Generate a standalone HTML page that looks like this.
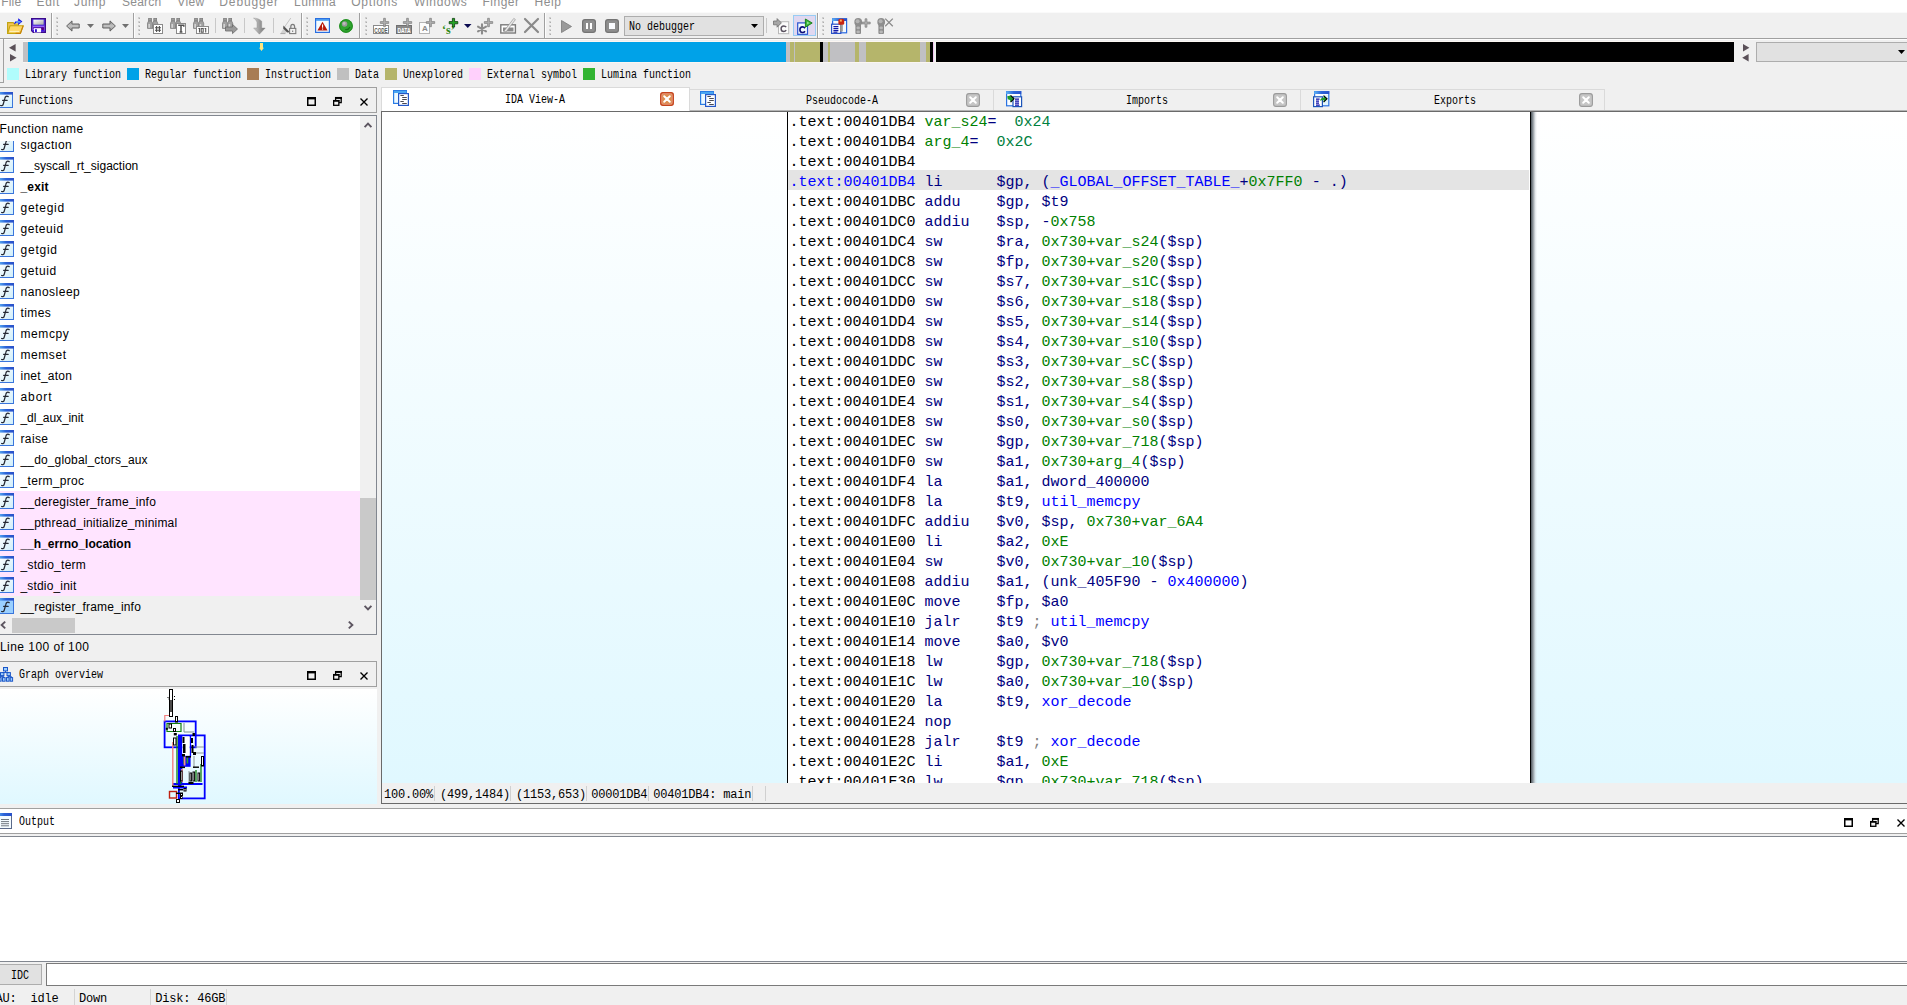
<!DOCTYPE html>
<html><head><meta charset="utf-8"><title>IDA</title><style>
html,body{margin:0;padding:0;overflow:hidden}
body{width:1907px;height:1005px;overflow:hidden;background:#f0f0f0;position:relative;font-family:"Liberation Sans",sans-serif}
div{position:absolute;box-sizing:border-box}
svg{position:absolute;overflow:visible}
.sim{font-family:"Liberation Mono",monospace;font-size:12px;line-height:12px;white-space:pre;height:12px;transform:scaleX(.8333);transform-origin:0 0;margin-top:-.3px;margin-left:.5px}
.ui{font-family:"Liberation Sans",sans-serif;font-size:12px;line-height:14px;white-space:pre;height:14px;color:#000}
.code{font-family:"Liberation Mono",monospace;font-size:15px;line-height:20px;white-space:pre;height:20px;left:0}
.st{font-family:"Liberation Mono",monospace;font-size:12px;letter-spacing:-0.2px;line-height:12px;white-space:pre;height:12px;color:#000}
.a{color:#000}.n{color:#000080}.g{color:#008000}.t{color:#008040}.b{color:#0000ff}.c{color:#808080}
</style></head><body>
<div style="left:0px;top:0px;width:1907px;height:12px;background:#fff"></div>
<div style="left:0px;top:12px;width:1907px;height:1px;background:#fafafa"></div>
<div style="left:0px;top:38px;width:1907px;height:1px;background:#a0a0a0"></div>
<div style="left:0px;top:39px;width:1907px;height:1px;background:#fcfcfc"></div>
<div style="left:51px;top:13px;width:1px;height:25px;background:#a0a0a0"></div>
<div style="left:52px;top:13px;width:1px;height:25px;background:#fdfdfd"></div>
<div style="left:133px;top:13px;width:1px;height:25px;background:#a0a0a0"></div>
<div style="left:134px;top:13px;width:1px;height:25px;background:#fdfdfd"></div>
<div style="left:301px;top:13px;width:1px;height:25px;background:#a0a0a0"></div>
<div style="left:302px;top:13px;width:1px;height:25px;background:#fdfdfd"></div>
<div style="left:359px;top:13px;width:1px;height:25px;background:#a0a0a0"></div>
<div style="left:360px;top:13px;width:1px;height:25px;background:#fdfdfd"></div>
<div style="left:544px;top:13px;width:1px;height:25px;background:#a0a0a0"></div>
<div style="left:545px;top:13px;width:1px;height:25px;background:#fdfdfd"></div>
<div style="left:817px;top:13px;width:1px;height:25px;background:#a0a0a0"></div>
<div style="left:818px;top:13px;width:1px;height:25px;background:#fdfdfd"></div>
<svg style="left:56px;top:17px" width="3" height="19"><rect x="0" y="0" width="2" height="2" fill="#d0d0d0"/><rect x="1" y="1" width="1" height="1" fill="#aeaeae"/><rect x="0" y="4" width="2" height="2" fill="#d0d0d0"/><rect x="1" y="5" width="1" height="1" fill="#aeaeae"/><rect x="0" y="8" width="2" height="2" fill="#d0d0d0"/><rect x="1" y="9" width="1" height="1" fill="#aeaeae"/><rect x="0" y="12" width="2" height="2" fill="#d0d0d0"/><rect x="1" y="13" width="1" height="1" fill="#aeaeae"/><rect x="0" y="16" width="2" height="2" fill="#d0d0d0"/><rect x="1" y="17" width="1" height="1" fill="#aeaeae"/></svg>
<svg style="left:138px;top:17px" width="3" height="19"><rect x="0" y="0" width="2" height="2" fill="#d0d0d0"/><rect x="1" y="1" width="1" height="1" fill="#aeaeae"/><rect x="0" y="4" width="2" height="2" fill="#d0d0d0"/><rect x="1" y="5" width="1" height="1" fill="#aeaeae"/><rect x="0" y="8" width="2" height="2" fill="#d0d0d0"/><rect x="1" y="9" width="1" height="1" fill="#aeaeae"/><rect x="0" y="12" width="2" height="2" fill="#d0d0d0"/><rect x="1" y="13" width="1" height="1" fill="#aeaeae"/><rect x="0" y="16" width="2" height="2" fill="#d0d0d0"/><rect x="1" y="17" width="1" height="1" fill="#aeaeae"/></svg>
<svg style="left:306px;top:17px" width="3" height="19"><rect x="0" y="0" width="2" height="2" fill="#d0d0d0"/><rect x="1" y="1" width="1" height="1" fill="#aeaeae"/><rect x="0" y="4" width="2" height="2" fill="#d0d0d0"/><rect x="1" y="5" width="1" height="1" fill="#aeaeae"/><rect x="0" y="8" width="2" height="2" fill="#d0d0d0"/><rect x="1" y="9" width="1" height="1" fill="#aeaeae"/><rect x="0" y="12" width="2" height="2" fill="#d0d0d0"/><rect x="1" y="13" width="1" height="1" fill="#aeaeae"/><rect x="0" y="16" width="2" height="2" fill="#d0d0d0"/><rect x="1" y="17" width="1" height="1" fill="#aeaeae"/></svg>
<svg style="left:365px;top:17px" width="3" height="19"><rect x="0" y="0" width="2" height="2" fill="#d0d0d0"/><rect x="1" y="1" width="1" height="1" fill="#aeaeae"/><rect x="0" y="4" width="2" height="2" fill="#d0d0d0"/><rect x="1" y="5" width="1" height="1" fill="#aeaeae"/><rect x="0" y="8" width="2" height="2" fill="#d0d0d0"/><rect x="1" y="9" width="1" height="1" fill="#aeaeae"/><rect x="0" y="12" width="2" height="2" fill="#d0d0d0"/><rect x="1" y="13" width="1" height="1" fill="#aeaeae"/><rect x="0" y="16" width="2" height="2" fill="#d0d0d0"/><rect x="1" y="17" width="1" height="1" fill="#aeaeae"/></svg>
<svg style="left:549px;top:17px" width="3" height="19"><rect x="0" y="0" width="2" height="2" fill="#d0d0d0"/><rect x="1" y="1" width="1" height="1" fill="#aeaeae"/><rect x="0" y="4" width="2" height="2" fill="#d0d0d0"/><rect x="1" y="5" width="1" height="1" fill="#aeaeae"/><rect x="0" y="8" width="2" height="2" fill="#d0d0d0"/><rect x="1" y="9" width="1" height="1" fill="#aeaeae"/><rect x="0" y="12" width="2" height="2" fill="#d0d0d0"/><rect x="1" y="13" width="1" height="1" fill="#aeaeae"/><rect x="0" y="16" width="2" height="2" fill="#d0d0d0"/><rect x="1" y="17" width="1" height="1" fill="#aeaeae"/></svg>
<svg style="left:822px;top:17px" width="3" height="19"><rect x="0" y="0" width="2" height="2" fill="#d0d0d0"/><rect x="1" y="1" width="1" height="1" fill="#aeaeae"/><rect x="0" y="4" width="2" height="2" fill="#d0d0d0"/><rect x="1" y="5" width="1" height="1" fill="#aeaeae"/><rect x="0" y="8" width="2" height="2" fill="#d0d0d0"/><rect x="1" y="9" width="1" height="1" fill="#aeaeae"/><rect x="0" y="12" width="2" height="2" fill="#d0d0d0"/><rect x="1" y="13" width="1" height="1" fill="#aeaeae"/><rect x="0" y="16" width="2" height="2" fill="#d0d0d0"/><rect x="1" y="17" width="1" height="1" fill="#aeaeae"/></svg>
<div style="left:215px;top:18px;width:1px;height:15px;background:#c8c8c8"></div>
<div style="left:244px;top:18px;width:1px;height:15px;background:#c8c8c8"></div>
<div style="left:273px;top:18px;width:1px;height:15px;background:#c8c8c8"></div>
<div style="left:766px;top:18px;width:1px;height:15px;background:#c8c8c8"></div>
<svg style="left:7px;top:17px" width="17" height="17" viewBox="0 0 17 17">
<path d="M.6 5.6h5.6l1.2 1.4h4V16.4H.6z" fill="#f6c455" stroke="#bfa310" stroke-width="1.1"/>
<path d="M3 8.8h13.2L13.4 16.4H.7z" fill="#ffd868" stroke="#c4a512" stroke-width="1.1"/>
<path d="M13.4 16.4H8.6M16.2 8.8l-2.8 7.6" stroke="#c8800a" stroke-width="1.1" fill="none"/>
<path d="M2.6 14.4h9.4" stroke="#fff3c4" stroke-width="1"/>
<path d="M7 7.6c.2-2.4 1.4-3.8 4.2-3.8V1.2L15.4 4.6 11.2 8V5.8c-1.8 0-3.2.4-4.2 1.8z" fill="#1414e4"/>
<path d="M9 4.9h4.6" stroke="#7fe4ff" stroke-width="1.1"/></svg>
<svg style="left:31px;top:18px" width="15" height="15" viewBox="0 0 15 15">
<path d="M.7.7h13.6v13.6H2.3L.7 12.7z" fill="#9966ff" stroke="#3a0a8c" stroke-width="1.4"/>
<rect x="1.4" y="1.4" width="12.2" height="6.2" fill="#3418cc"/>
<rect x="2.3" y="1.7" width="10.4" height="5" fill="url(#gfl)"/>
<rect x="2.2" y="9.2" width="10.6" height="1.4" fill="#4a0a98"/>
<rect x="10.4" y="9.6" width="2.5" height="2.8" fill="#5a0078"/>
<rect x="3" y="10.2" width="7" height="4.2" fill="#fbfbff"/>
<rect x="4" y="11.2" width="1.9" height="2.8" fill="#3010d0"/>
<path d="M1.6 12.8h1.4M10.2 12.8h3" stroke="#2200e6" stroke-width="1"/></svg>
<svg style="left:66px;top:19.5px" width="14" height="12" viewBox="0 0 14 12"><path d="M0.6 6 6 .9v3.1h7.2v4H6v3.1z" fill="url(#gar)" stroke="#626262" stroke-width="1"/></svg>
<svg style="left:87px;top:24px" width="7" height="4" viewBox="0 0 7 4"><path d="M0 0h7l-3.5 4z" fill="#707070"/></svg>
<svg style="left:101.5px;top:19.5px" width="14" height="12" viewBox="0 0 14 12"><path d="M13.4 6 8 .9v3.1H.8v4H8v3.1z" fill="url(#gar)" stroke="#626262" stroke-width="1"/></svg>
<svg style="left:122px;top:24px" width="7" height="4" viewBox="0 0 7 4"><path d="M0 0h7l-3.5 4z" fill="#707070"/></svg>
<svg style="left:147px;top:18px" width="16" height="16" viewBox="0 0 16 16"><g stroke="#7e7e7e" stroke-width=".8"><rect x="1.6" y=".5" width="2.8" height="2.6" fill="#9c9c9c"/><rect x="6.8" y=".5" width="2.8" height="2.6" fill="#9c9c9c"/><path d="M.5 10.4V5.2L1.6 3h2.8l1.1 2.2v5.2z" fill="#a2a2a2"/><path d="M5.7 10.4V5.2L6.8 3h2.8l1.1 2.2v5.2z" fill="#a2a2a2"/></g><rect x="1.4" y="6" width="1.6" height="3.8" fill="#d4d4d4"/><rect x="6.6" y="6" width="1.6" height="3.8" fill="#d4d4d4"/><rect x="4.9" y="5" width="1.2" height="2" fill="#8a8a8a"/><rect x="6.5" y="6.5" width="9" height="9" fill="#fff" stroke="#8a8a8a"/><path d="M9.6 8v6M12.4 8v6M8 9.7h6M8 12.3h6" stroke="#505050" stroke-width="1.1" fill="none"/></svg>
<svg style="left:170px;top:18px" width="16" height="16" viewBox="0 0 16 16"><g stroke="#7e7e7e" stroke-width=".8"><rect x="1.6" y=".5" width="2.8" height="2.6" fill="#9c9c9c"/><rect x="6.8" y=".5" width="2.8" height="2.6" fill="#9c9c9c"/><path d="M.5 10.4V5.2L1.6 3h2.8l1.1 2.2v5.2z" fill="#a2a2a2"/><path d="M5.7 10.4V5.2L6.8 3h2.8l1.1 2.2v5.2z" fill="#a2a2a2"/></g><rect x="1.4" y="6" width="1.6" height="3.8" fill="#d4d4d4"/><rect x="6.6" y="6" width="1.6" height="3.8" fill="#d4d4d4"/><rect x="4.9" y="5" width="1.2" height="2" fill="#8a8a8a"/><rect x="6.5" y="5.5" width="9" height="10" fill="#fff" stroke="#8a8a8a"/><path d="M8.2 7.2h5.6v1.6M11 7.2v6.6M9.6 13.9h2.8" stroke="#505050" stroke-width="1.5" fill="none"/></svg>
<svg style="left:193px;top:18px" width="16" height="16" viewBox="0 0 16 16"><g stroke="#7e7e7e" stroke-width=".8"><rect x="1.6" y=".5" width="2.8" height="2.6" fill="#9c9c9c"/><rect x="6.8" y=".5" width="2.8" height="2.6" fill="#9c9c9c"/><path d="M.5 10.4V5.2L1.6 3h2.8l1.1 2.2v5.2z" fill="#a2a2a2"/><path d="M5.7 10.4V5.2L6.8 3h2.8l1.1 2.2v5.2z" fill="#a2a2a2"/></g><rect x="1.4" y="6" width="1.6" height="3.8" fill="#d4d4d4"/><rect x="6.6" y="6" width="1.6" height="3.8" fill="#d4d4d4"/><rect x="4.9" y="5" width="1.2" height="2" fill="#8a8a8a"/><rect x="3.5" y="8.5" width="12" height="7" fill="#fff" stroke="#8a8a8a"/><path d="M5.4 10.5h1.1v4M11.6 10.5h1.1v4" stroke="#585858" stroke-width="1.1" fill="none"/><rect x="8.2" y="10.5" width="2" height="3.7" fill="none" stroke="#585858" stroke-width="1.1"/></svg>
<svg style="left:222px;top:18px" width="16" height="16" viewBox="0 0 16 16"><g stroke="#7e7e7e" stroke-width=".8"><rect x="1.6" y=".5" width="2.8" height="2.6" fill="#9c9c9c"/><rect x="6.8" y=".5" width="2.8" height="2.6" fill="#9c9c9c"/><path d="M.5 10.4V5.2L1.6 3h2.8l1.1 2.2v5.2z" fill="#a2a2a2"/><path d="M5.7 10.4V5.2L6.8 3h2.8l1.1 2.2v5.2z" fill="#a2a2a2"/></g><rect x="1.4" y="6" width="1.6" height="3.8" fill="#d4d4d4"/><rect x="6.6" y="6" width="1.6" height="3.8" fill="#d4d4d4"/><rect x="4.9" y="5" width="1.2" height="2" fill="#8a8a8a"/><path d="M3.5 9h7V6.4l5 4.6-5 4.6V13h-7z" fill="#9a9a9a" stroke="#6a6a6a" stroke-width=".8"/></svg>
<svg style="left:253px;top:17px" width="13" height="18" viewBox="0 0 13 18"><defs><linearGradient id="gda" x1="0" x2="1"><stop offset="0" stop-color="#d0d0d0"/><stop offset=".55" stop-color="#9a9a9a"/><stop offset="1" stop-color="#767676"/></linearGradient></defs><path d="M.5 1.2C3.6 1 6.6 2 8.7 4.2V11h3.5L6.4 17.2.6 11H4V5.6C3.6 3.4 2.2 1.9.5 1.2z" fill="url(#gda)" stroke="#8a8a8a" stroke-width=".4"/></svg>
<svg style="left:280px;top:17px" width="17" height="17" viewBox="0 0 17 17"><path d="M10.8 1 3.6 11.4" stroke="#c4c4c4" stroke-width="1"/><path d="M4 10.8 7.6 14 5.4 16.6H.4z" fill="#d2d2d2"/><path d="M.4 16.6h5" stroke="#a8a8a8" stroke-width="1"/><path d="M3.4 8.4 10 15.2 7.2 15.6 3.2 11.6z" fill="#555"/><path d="M5.4 9.6 14.5 6.4 15 11" fill="#e6e6e6" opacity=".7"/><rect x="9.6" y="11.4" width="6.2" height="5.2" fill="#f2f2f2" stroke="#7c7c7c" stroke-width="1.1"/><path d="M10.8 11.4V9.6a1.9 2.3 0 0 1 3.8 0v1.8" fill="none" stroke="#7c7c7c" stroke-width="1.2"/><rect x="12.2" y="13.6" width="1" height="1.2" fill="#505050"/></svg>
<svg style="left:315px;top:18px" width="15" height="15" viewBox="0 0 15 15"><rect x=".6" y=".6" width="13.8" height="13.8" fill="#f4fbff" stroke="#2a6fe0" stroke-width="1.2"/><rect x="1" y="1" width="13" height="1.8" fill="#4a9cf0"/><path d="M7.5 3.8 12.6 12.6H2.4z" fill="#b81808"/><rect x="7" y="6.4" width="1.1" height="3.3" fill="#fff"/><rect x="7" y="10.5" width="1.1" height="1.1" fill="#fff"/></svg>
<svg style="left:339px;top:19px" width="14" height="14" viewBox="0 0 14 14"><circle cx="7" cy="7" r="6.8" fill="#2fa42f"/><circle cx="7" cy="7" r="6.3" fill="none" stroke="#1c8a1c" stroke-width="1"/><circle cx="5.6" cy="5" r="2.7" fill="#9a9a9a"/><circle cx="5.2" cy="4.5" r="1.4" fill="#bdbdbd"/><path d="M6.2 10.5c2 .4 3.8-.6 4.8-2.6" stroke="#157015" stroke-width="1.2" fill="none"/></svg>
<svg style="left:373px;top:18px" width="16" height="16" viewBox="0 0 16 16"><rect x=".5" y="7.5" width="15" height="8" fill="#fff" stroke="#8a8a8a"/><text x="1.3" y="14.8" font-family="Liberation Sans" font-weight="700" font-size="7.4" fill="#585858" textLength="13.4" lengthAdjust="spacingAndGlyphs">CODE</text><path d="M10.6 0.3h1.8v3.3h3.3v1.8h-3.3v3.3h-1.8v-3.3h-3.3v-1.8h3.3z" fill="#b0b0b0" stroke="#7c7c7c" stroke-width=".7"/></svg>
<svg style="left:396px;top:18px" width="16" height="16" viewBox="0 0 16 16"><rect x=".5" y="7.5" width="15" height="8" fill="#8a8a8a" stroke="#707070"/><text x="1.4" y="14.8" font-family="Liberation Sans" font-weight="700" font-size="7.4" fill="#fff" textLength="13.2" lengthAdjust="spacingAndGlyphs">DATA</text><path d="M10.6 0.3h1.8v3.3h3.3v1.8h-3.3v3.3h-1.8v-3.3h-3.3v-1.8h3.3z" fill="#b0b0b0" stroke="#7c7c7c" stroke-width=".7"/></svg>
<svg style="left:419px;top:18px" width="16" height="16" viewBox="0 0 16 16"><rect x=".5" y="4.5" width="10" height="11" fill="#fcfcfc" stroke="#b4b4b4"/><text x="2.9" y="13.4" font-family="Liberation Sans" font-weight="700" font-size="8" fill="#8a8a8a">A</text><path d="M10.6 0.3h1.8v3.3h3.3v1.8h-3.3v3.3h-1.8v-3.3h-3.3v-1.8h3.3z" fill="#b0b0b0" stroke="#7c7c7c" stroke-width=".7"/></svg>
<svg style="left:442px;top:18px" width="16" height="16" viewBox="0 0 16 16"><text x="0" y="15.6" font-family="Liberation Serif" font-weight="700" font-size="12" fill="#2f8a18">‘s’</text><path d="M10.4.4h2.2v3.2h3.2v2.2h-3.2V9h-2.2V5.8H7.2V3.6h3.2z" fill="#25a825" stroke="#0a3a0a" stroke-width=".8"/></svg>
<svg style="left:464px;top:24px" width="7.5" height="4" viewBox="0 0 7.5 4"><path d="M0 0h7.5l-3.75 4z" fill="#0a0a50"/></svg>
<svg style="left:477px;top:18px" width="16" height="16" viewBox="0 0 16 16"><path d="M5 6.4v9.2M1 8.7l8 4.6M1 13.3l8-4.6" stroke="#8c8c8c" stroke-width="2.1" fill="none" stroke-linecap="round"/><path d="M10.6 0.3h1.8v3.3h3.3v1.8h-3.3v3.3h-1.8v-3.3h-3.3v-1.8h3.3z" fill="#b0b0b0" stroke="#7c7c7c" stroke-width=".7"/></svg>
<svg style="left:500px;top:17px" width="17" height="17" viewBox="0 0 17 17"><rect x=".8" y="7.8" width="14.6" height="8.2" fill="#fff" stroke="#7a7a7a" stroke-width="1.4"/><path d="M3 14.5V10.5h10.5v4z" fill="#8a8a8a"/><path d="M4 14 13.8 1.4l1.6 1.2L6 15z" fill="#e8e8e8" stroke="#8a8a8a" stroke-width=".6"/></svg>
<svg style="left:524px;top:18px" width="15" height="15" viewBox="0 0 15 15"><path d="M1 1 14 14M14 1 1 14" stroke="#8a8a8a" stroke-width="2.2" stroke-linecap="round"/></svg>
<svg style="left:561px;top:20px" width="11" height="13" viewBox="0 0 11 13"><path d="M.5.5 10.5 6.5.5 12.5z" fill="#9a9a9a" stroke="#7a7a7a" stroke-width=".8"/></svg>
<svg style="left:582px;top:19px" width="14" height="14" viewBox="0 0 14 14"><rect x=".6" y=".6" width="12.8" height="12.8" rx="2.4" fill="#8e8e8e" stroke="#747474" stroke-width="1.2"/><rect x="4" y="4" width="2" height="6" fill="#fff"/><rect x="8" y="4" width="2" height="6" fill="#fff"/></svg>
<svg style="left:605px;top:19px" width="14" height="14" viewBox="0 0 14 14"><rect x=".6" y=".6" width="12.8" height="12.8" rx="2.4" fill="#8e8e8e" stroke="#747474" stroke-width="1.2"/><rect x="4" y="4" width="6" height="6" fill="#fafcff"/></svg>
<div style="left:624px;top:16px;width:140px;height:20px;background:#e1e1e1;border:1px solid #adadad"></div>
<div class="sim" style="left:628px;top:21.1px;color:#000;">No debugger</div>
<svg style="left:751px;top:24px" width="7" height="4" viewBox="0 0 7 4"><path d="M0 0h7l-3.5 4z" fill="#000"/></svg>
<svg style="left:773px;top:18px" width="16" height="16" viewBox="0 0 16 16"><rect x="5.5" y="3.7" width="10.2" height="12" fill="#fbfbfb" stroke="#b8b8b8"/><path d="M13.2 9.2c-.6-.9-1.4-1.3-2.4-1.3-1.6 0-2.7 1.1-2.7 2.8s1.1 2.8 2.7 2.8c1 0 1.8-.4 2.4-1.3" fill="none" stroke="#5a5260" stroke-width="1.45"/><path d="M.5 3h3.6V.6L8.4 4.9 4.1 9.2V6.8H.5z" fill="#a6a6a6" stroke="#6e6e6e" stroke-width=".8"/></svg>
<div style="left:793px;top:15px;width:23px;height:21px;background:#e0d8f0;border:1px solid #98ccf4"></div>
<svg style="left:797px;top:18px" width="16" height="17" viewBox="0 0 16 17"><rect x=".7" y="4.9" width="9.8" height="11.4" fill="#f4fcff" stroke="#2a52d0" stroke-width="1.2"/><path d="M8 10.2c-.6-.9-1.4-1.3-2.4-1.3-1.6 0-2.7 1.1-2.7 2.8s1.1 2.8 2.7 2.8c1 0 1.8-.4 2.4-1.3" fill="none" stroke="#0c0c78" stroke-width="1.6"/><path d="M8.4 1 15.2 5 8.4 9.2z" fill="#3cb43c" stroke="#137a13" stroke-width=".9"/><path d="M10 3.6 12.6 5 10 6.6z" fill="#8ee08e"/></svg>
<svg style="left:831px;top:18px" width="16" height="16" viewBox="0 0 16 16"><rect x="1.6" y=".8" width="14" height="14" fill="#f4faff" stroke="#2a6ae0" stroke-width="1.2"/><rect x="1.2" y=".4" width="14.8" height="2.6" fill="url(#gft)"/><rect x=".6" y="6.2" width="9.2" height="9.2" fill="#fff" stroke="#2a52c8" stroke-width="1.2"/><path d="M2.4 8.6h5M2.4 10.6h5M2.4 12.6h5M2.4 14.2h4" stroke="#1018a8" stroke-width="1.1"/><rect x="9" y="6.5" width="2.6" height="7" fill="#7a7a7a"/><rect x="9.6" y="7" width="1" height="6" fill="#b0b0b0"/><rect x="7.4" y=".8" width="5.8" height="6" rx="1.6" fill="#c82410"/><rect x="8.8" y="1.6" width="2" height="2" fill="#f8b060"/></svg>
<svg style="left:854px;top:18px" width="17" height="16" viewBox="0 0 17 16"><rect x="1.4" y="5" width="5.6" height="11" rx="1" fill="#8a8a8a"/><circle cx="4.2" cy="4" r="3.9" fill="#8e8e8e"/><circle cx="3.6" cy="3.2" r="2" fill="#b4b4b4"/><rect x="2.6" y="8.4" width="3.2" height="2.8" rx=".8" fill="#b8b8b8"/><rect x="2.6" y="12.4" width="3.2" height="2.8" rx=".8" fill="#b8b8b8"/><path d="M11.1 .8h1.8v3.3h3.3v1.8h-3.3v3.3h-1.8V5.9H7.8V4.1h3.3z" fill="#b0b0b0" stroke="#7c7c7c" stroke-width=".7"/></svg>
<svg style="left:877px;top:18px" width="17" height="16" viewBox="0 0 17 16"><rect x="1.4" y="5" width="5.6" height="11" rx="1" fill="#8a8a8a"/><circle cx="4.2" cy="4" r="3.9" fill="#8e8e8e"/><circle cx="3.6" cy="3.2" r="2" fill="#b4b4b4"/><rect x="2.6" y="8.4" width="3.2" height="2.8" rx=".8" fill="#b8b8b8"/><rect x="2.6" y="12.4" width="3.2" height="2.8" rx=".8" fill="#b8b8b8"/><path d="M8.2.6 15.8 8.2M15.8.6 8.2 8.2" stroke="#8a8a8a" stroke-width="1.3"/></svg>
<div style="left:3px;top:39px;width:1px;height:44px;background:#a0a0a0"></div>
<div style="left:0px;top:82px;width:4px;height:1px;background:#a0a0a0"></div>
<svg style="left:9px;top:44px" width="7" height="8" viewBox="0 0 7 8"><path d="M6.6 0v7.6L0 3.8z" fill="#5a5058"/></svg>
<svg style="left:10px;top:54px" width="7" height="8" viewBox="0 0 7 8"><path d="M0 0v7.6L6.6 3.8z" fill="#5a5058"/></svg>
<div style="left:23px;top:41px;width:1711px;height:22px;background:#fbf6f2"></div>
<div style="left:23px;top:42px;width:5px;height:20px;background:#c0c0c3"></div>
<div style="left:28px;top:42px;width:758px;height:20px;background:#00a2e8"></div>
<div style="left:786px;top:42px;width:4px;height:20px;background:#c0c0c3"></div>
<div style="left:790px;top:42px;width:4px;height:20px;background:#b5b56b"></div>
<div style="left:794px;top:42px;width:1px;height:20px;background:#c0c0c3"></div>
<div style="left:795px;top:42px;width:25px;height:20px;background:#b5b56b"></div>
<div style="left:820px;top:42px;width:3px;height:20px;background:#000"></div>
<div style="left:823px;top:42px;width:5px;height:20px;background:#c0c0c3"></div>
<div style="left:828px;top:42px;width:2px;height:20px;background:#b5b56b"></div>
<div style="left:830px;top:42px;width:25px;height:20px;background:#c0c0c3"></div>
<div style="left:855px;top:42px;width:4px;height:20px;background:#b5b56b"></div>
<div style="left:859px;top:42px;width:7px;height:20px;background:#c0c0c3"></div>
<div style="left:866px;top:42px;width:54px;height:20px;background:#b5b56b"></div>
<div style="left:920px;top:42px;width:6px;height:20px;background:#c0c0c3"></div>
<div style="left:926px;top:42px;width:4px;height:20px;background:#b5b56b"></div>
<div style="left:930px;top:42px;width:3px;height:20px;background:#000"></div>
<div style="left:933px;top:42px;width:1px;height:20px;background:#f4c8f4"></div>
<div style="left:934px;top:42px;width:2px;height:20px;background:#f0f0f0"></div>
<div style="left:936px;top:42px;width:798px;height:20px;background:#000"></div>
<svg style="left:259px;top:43px" width="5" height="8" viewBox="0 0 5 8"><path d="M1 0h3v4.8h1L2.5 8 0 4.8h1z" fill="#ffe680"/></svg>
<svg style="left:1743px;top:44px" width="7" height="8" viewBox="0 0 7 8"><path d="M0 0v7.6L6.4 3.8z" fill="#5a5058"/></svg>
<svg style="left:1742px;top:54px" width="7" height="8" viewBox="0 0 7 8"><path d="M6.6 0v7.6L.2 3.8z" fill="#5a5058"/></svg>
<div style="left:1756px;top:42px;width:160px;height:20px;background:#e1e1e1;border:1px solid #adadad"></div>
<svg style="left:1898px;top:50px" width="7" height="4" viewBox="0 0 7 4"><path d="M0 0h7l-3.5 4z" fill="#000"/></svg>
<svg width="0" height="0" style="left:0;top:0"><defs>
<linearGradient id="gfi" x1="0" y1="0" x2="1" y2="1"><stop offset="0" stop-color="#ffffff"/><stop offset="1" stop-color="#cfeefa"/></linearGradient>
<linearGradient id="gft" x1="0" x2="1"><stop offset="0" stop-color="#5fb4f4"/><stop offset=".5" stop-color="#2a62d8"/><stop offset="1" stop-color="#2a50c8"/></linearGradient>
<linearGradient id="gar" x1="0" y1="0" x2="0" y2="1"><stop offset="0" stop-color="#8a8a8a"/><stop offset=".5" stop-color="#c4c4c4"/><stop offset="1" stop-color="#8a8a8a"/></linearGradient>
<linearGradient id="gfl" x1="0" y1="0" x2="1" y2="1"><stop offset="0" stop-color="#ffffff"/><stop offset="1" stop-color="#a8a8a8"/></linearGradient>
</defs></svg>
<div style="left:-1px;top:87px;width:378px;height:26px;background:#f0f0f0;border:1px solid #a0a0a0"></div>
<svg style="left:-3px;top:92px" width="16" height="16" viewBox="0 0 16 16"><rect x=".5" y=".5" width="15" height="15" fill="url(#gfi)" stroke="#3a76dc"/><rect x="0" y="0" width="16" height="2.6" fill="url(#gft)"/><path d="M11.2 4.6c-1.5-.9-2.9-.2-3.3 1.6L6.3 12c-.4 1.5-1.3 2-2.7 1.5M5.6 8.3h4.6" fill="none" stroke="#262a34" stroke-width="1.25" stroke-linecap="round"/></svg>
<div class="sim" style="left:18px;top:95px;color:#000;">Functions</div>
<svg style="left:307px;top:97px" width="9" height="9" viewBox="0 0 9 9"><rect x=".75" y=".75" width="7.5" height="7.5" fill="none" stroke="#000" stroke-width="1.5"/><rect x="0" y="0" width="9" height="2.4" fill="#000"/></svg>
<svg style="left:333.4px;top:97px" width="9" height="9" viewBox="0 0 9 9"><rect x="2.6" y=".6" width="5.6" height="5" fill="none" stroke="#000" stroke-width="1.3"/><rect x="2" y="0" width="7" height="1.9" fill="#000"/><rect x=".65" y="3.6" width="5.2" height="4.7" fill="#f0f0f0" stroke="#000" stroke-width="1.3"/><rect x="0" y="3" width="6.5" height="1.7" fill="#000"/></svg>
<svg style="left:360px;top:97.5px" width="8" height="8" viewBox="0 0 8 8"><path d="M.5.5 7.5 7.5M7.5.5.5 7.5" stroke="#000" stroke-width="1.35"/></svg>
<div style="left:-1px;top:115px;width:378px;height:520px;background:#fff;border:1px solid #828790"></div>
<div style="left:0px;top:491px;width:360px;height:105px;background:#ffe4ff"></div>
<div style="left:0px;top:596px;width:360px;height:21px;background:#f0f0f0"></div>
<div style="left:360px;top:116px;width:16px;height:501px;background:#f0f0f0"></div>
<div style="left:360px;top:498px;width:16px;height:102px;background:#c9c9c9"></div>
<svg style="left:364px;top:122px" width="8" height="6" viewBox="0 0 8 6"><path d="M.6 5.2 4 1.6 7.4 5.2" stroke="#5c5560" stroke-width="1.9" fill="none"/></svg>
<svg style="left:364px;top:605px" width="8" height="6" viewBox="0 0 8 6"><path d="M.6.8 4 4.4 7.4.8" stroke="#5c5560" stroke-width="1.9" fill="none"/></svg>
<div style="left:0px;top:617px;width:376px;height:17px;background:#f0f0f0"></div>
<div style="left:12px;top:618px;width:63px;height:15px;background:#c9c9c9"></div>
<svg style="left:0px;top:621px" width="6" height="8" viewBox="0 0 6 8"><path d="M5.2.6 1.6 4 5.2 7.4" stroke="#5c5560" stroke-width="1.9" fill="none"/></svg>
<svg style="left:348px;top:621px" width="6" height="8" viewBox="0 0 6 8"><path d="M.8.6 4.4 4 .8 7.4" stroke="#5c5560" stroke-width="1.9" fill="none"/></svg>
<div style="left:-1px;top:661px;width:378px;height:26px;background:#f0f0f0;border:1px solid #a0a0a0"></div>
<svg style="left:-3px;top:667px" width="16" height="15" viewBox="0 0 16 15"><g fill="#9fd0ff" stroke="#1a56c8" stroke-width="1"><rect x="6.5" y=".5" width="4" height="3.4"/><rect x="3.5" y="5.6" width="3.4" height="3"/><rect x="10" y="5.6" width="3.4" height="3"/><rect x="1.5" y="10.6" width="2.6" height="3.6"/><rect x="5.5" y="10.6" width="2.6" height="3.6"/><rect x="9.5" y="10.6" width="2.6" height="3.6"/><rect x="13.2" y="10.6" width="2.4" height="3.6"/></g><path d="M8.5 4v1.6M5.2 5.6h6.6M2.8 10.6v-1h4v1M10.8 10.6v-1h3.6v1" stroke="#1a56c8" fill="none"/></svg>
<div class="sim" style="left:18px;top:669px;color:#000;">Graph overview</div>
<svg style="left:307px;top:671px" width="9" height="9" viewBox="0 0 9 9"><rect x=".75" y=".75" width="7.5" height="7.5" fill="none" stroke="#000" stroke-width="1.5"/><rect x="0" y="0" width="9" height="2.4" fill="#000"/></svg>
<svg style="left:333.4px;top:671px" width="9" height="9" viewBox="0 0 9 9"><rect x="2.6" y=".6" width="5.6" height="5" fill="none" stroke="#000" stroke-width="1.3"/><rect x="2" y="0" width="7" height="1.9" fill="#000"/><rect x=".65" y="3.6" width="5.2" height="4.7" fill="#f0f0f0" stroke="#000" stroke-width="1.3"/><rect x="0" y="3" width="6.5" height="1.7" fill="#000"/></svg>
<svg style="left:360px;top:671.5px" width="8" height="8" viewBox="0 0 8 8"><path d="M.5.5 7.5 7.5M7.5.5.5 7.5" stroke="#000" stroke-width="1.35"/></svg>
<div style="left:0px;top:689px;width:377px;height:115px;background:linear-gradient(#ffffff,#e0f8ff)"></div>
<svg style="left:120px;top:680px" width="140" height="130" viewBox="0 0 140 130">
<g fill="none" stroke-width="1.6">
<rect x="44.6" y="41.4" width="31.1" height="25.9" stroke="#0000ff" stroke-width="1.8"/>
<rect x="58.9" y="55.4" width="25.8" height="63" stroke="#0000ff" stroke-width="1.8"/>
<rect x="59" y="55.5" width="3.4" height="48" fill="#0000ff" stroke="none"/><rect x="59" y="75.6" width="11.6" height="11.2" fill="#0000ff" stroke="none"/><rect x="69.6" y="55.5" width="1.5" height="21" fill="#0000ff" stroke="none"/><rect x="62.4" y="56.6" width="7.2" height="19" fill="#fff" stroke="none"/>
<rect x="58.5" y="86" width="3" height="22" fill="#0000ff" stroke="none"/>
<path d="M52.5 104h30M53 107.5h14" stroke="#0000ff" stroke-width="2.2"/>
<path d="M44.8 41.5v-6h6" stroke="#f08080" stroke-width="1.2"/>
<path d="M52.8 62v44" stroke="#f08080" stroke-width="1.4"/>
<path d="M57 56v48M60.8 92v12M81 84v18M76 90v12M64 76v8" stroke="#108010" stroke-width="1.3"/>
<path d="M47 43.5h14v8h-14z" stroke="#108010" stroke-width="1.2"/>
<path d="M64 43v9M64 52h10" stroke="#809090" stroke-width="1"/>
<path d="M75 67h9M76 73h8M69 91v12M74 76v12" stroke="#909898" stroke-width="1"/>
<path d="M64.6 76.5v9M62 89v13" stroke="#f09090" stroke-width="1.8"/><path d="M67.4 76.5v7" stroke="#30a030" stroke-width="1.6"/>
<rect x="49.5" y="111.5" width="7" height="6.5" stroke="#c02010" stroke-width="1.4"/>
</g>
<g fill="#fff" stroke="#000" stroke-width="1">
<rect x="49.5" y="9.5" width="3" height="27"/>
<rect x="55.5" y="36.5" width="2" height="5.5"/>
<rect x="49" y="44" width="2.5" height="4"/>
<rect x="53.5" y="48.5" width="2" height="3"/>
<rect x="53.5" y="58" width="2.5" height="7"/>
<rect x="81.5" y="76.5" width="2" height="9.5"/>
<rect x="70" y="93" width="1.6" height="8"/><rect x="73" y="92" width="1.6" height="9"/><rect x="78" y="93" width="1.6" height="8"/>
<rect x="60.5" y="91" width="1.6" height="10"/>
<rect x="56.5" y="119.5" width="3" height="3"/>
<rect x="60.5" y="113" width="2" height="2.5"/><rect x="64" y="108.5" width="2" height="2.5"/><rect x="60.5" y="116.5" width="1.5" height="2"/>
</g>
<g fill="#000">
<rect x="50.3" y="20" width="1.4" height="12"/><rect x="47.5" y="17" width="1" height="1"/><rect x="54" y="16" width="1" height="1"/><rect x="54" y="19" width="1" height="1"/><rect x="48.5" y="18.5" width="1" height="1"/>
<rect x="45.8" y="47.8" width="2" height="2"/><rect x="53.8" y="53" width="3" height="2.4"/><rect x="72.5" y="53" width="2.4" height="3"/>
<rect x="62.5" y="57" width="2" height="6"/><rect x="63" y="64" width="2.5" height="9"/><rect x="71" y="58" width="2" height="5"/><rect x="71.5" y="65" width="2" height="8"/>
<rect x="62" y="74" width="3" height="2.4"/><rect x="66" y="76" width="5" height="1.6"/><rect x="73" y="72" width="3" height="3"/>
<rect x="60" y="86.5" width="5" height="1.6"/><rect x="73" y="86.5" width="6" height="1.4"/><rect x="68.5" y="102" width="5" height="2"/><rect x="52" y="105.6" width="12" height="1.4"/>
<rect x="58" y="109" width="5" height="1.4"/><rect x="56" y="112.6" width="4" height="1.4"/>
</g></svg>
<div style="left:690px;top:89px;width:915px;height:22px;background:#f0f0f0;border-top:1px solid #dadada"></div>
<div style="left:993px;top:89px;width:1px;height:21px;background:#dadada"></div>
<div style="left:1300px;top:89px;width:1px;height:21px;background:#dadada"></div>
<div style="left:1604px;top:89px;width:1px;height:21px;background:#dadada"></div>
<div style="left:381px;top:110px;width:1526px;height:1px;background:#b4b4b4"></div>
<div style="left:381px;top:87px;width:309px;height:24px;background:#fff;border:1px solid #dadada;border-bottom:none"></div>
<svg style="left:393px;top:90px" width="16" height="16" viewBox="0 0 16 16"><rect x=".6" y=".6" width="12.8" height="12.8" fill="#eefaff" stroke="#2a7ce4" stroke-width="1.2"/><rect x="1" y="1" width="12.4" height="2" fill="#49a6f2"/><rect x="5.6" y="3.6" width="9.8" height="11.8" fill="#fff" stroke="#2458c8" stroke-width="1.2"/><path d="M7.4 5.5h3.4M9.2 7.5h4.6M9.2 9.5h4.6M7.4 11.5h3.4M9.2 13.5h4.6" stroke="#4a4a52" stroke-width="1"/></svg>
<div class="sim" style="left:504px;top:94px;color:#000;">IDA View-A</div>
<svg style="left:660px;top:92px" width="14" height="14" viewBox="0 0 14 14"><rect x=".8" y=".8" width="12.4" height="12.4" rx="2" fill="#dc8c4e" stroke="#c4441c" stroke-width="1.5"/><rect x="1.8" y="1.8" width="10.4" height="10.4" rx="1.6" fill="none" stroke="#ec9a8a" stroke-width=".8"/><path d="M4.2 4.2 9.8 9.8M9.8 4.2 4.2 9.8" stroke="#fff" stroke-width="2" stroke-linecap="round"/></svg>
<svg style="left:700px;top:91px" width="16" height="16" viewBox="0 0 16 16"><rect x=".6" y=".6" width="12.8" height="12.8" fill="#eefaff" stroke="#2a7ce4" stroke-width="1.2"/><rect x="1" y="1" width="12.4" height="2" fill="#49a6f2"/><rect x="5.6" y="3.6" width="9.8" height="11.8" fill="#fff" stroke="#2458c8" stroke-width="1.2"/><path d="M7.4 5.5h3.4M9.2 7.5h4.6M9.2 9.5h4.6M7.4 11.5h3.4M9.2 13.5h4.6" stroke="#4a4a52" stroke-width="1"/></svg>
<div class="sim" style="left:805px;top:95.5px;color:#000;">Pseudocode-A</div>
<svg style="left:966px;top:93px" width="14" height="14" viewBox="0 0 14 14"><rect x=".6" y=".6" width="12.8" height="12.8" rx="2.4" fill="#c6c6c6" stroke="#9a9a9a" stroke-width="1.1"/><path d="M4.2 4.2 9.8 9.8M9.8 4.2 4.2 9.8" stroke="#fff" stroke-width="2" stroke-linecap="round"/></svg>
<svg style="left:1006px;top:91px" width="16" height="16" viewBox="0 0 16 16"><rect x=".6" y=".6" width="14.2" height="14.2" fill="#fafdff" stroke="#2a72e2" stroke-width="1.2"/><rect x=".2" y=".2" width="15" height="2.8" fill="url(#gft)"/><rect x="7" y="5.8" width="8.6" height="9.8" fill="#fdfeff" stroke="#1c54b8" stroke-width="1.2"/><path d="M9 8.1h4M9 10.1h4M9 12.1h4M9 14.1h4" stroke="#0a0aa8" stroke-width="1.2"/><path d="M1.2 5.2 4.6 4.4 8 7.8 4.6 11.2 4 9 1.8 8.2z" fill="#1f9a2a"/><path d="M4.6 4.4 8 7.8 4.6 11.2" fill="none" stroke="#000" stroke-width="1.1"/></svg>
<div class="sim" style="left:1125px;top:95.5px;color:#000;">Imports</div>
<svg style="left:1273px;top:93px" width="14" height="14" viewBox="0 0 14 14"><rect x=".6" y=".6" width="12.8" height="12.8" rx="2.4" fill="#c6c6c6" stroke="#9a9a9a" stroke-width="1.1"/><path d="M4.2 4.2 9.8 9.8M9.8 4.2 4.2 9.8" stroke="#fff" stroke-width="2" stroke-linecap="round"/></svg>
<svg style="left:1313px;top:91px" width="16" height="16" viewBox="0 0 16 16"><rect x="1.6" y=".6" width="14.2" height="14.2" fill="#fafdff" stroke="#2a72e2" stroke-width="1.2"/><rect x="1.2" y=".2" width="15" height="2.8" fill="url(#gft)"/><rect x="10.5" y="4" width="4.5" height="10" fill="#dff4fd"/><rect x=".6" y="5.8" width="8.8" height="9.8" fill="#fdfeff" stroke="#1c54b8" stroke-width="1.2"/><path d="M3 8.1h3.6M3 10.1h3M3 12.1h3M3 14.1h3.8" stroke="#0a0aa8" stroke-width="1.2"/><path d="M7 9.8c.4-2 1.6-3 3.6-3V4.6l3.4 3.2-3.4 3.4V9c-1.4 0-2.4.2-3.6.8z" fill="#1f9a2a"/><path d="M10.6 4.6 14 7.8l-3.4 3.4" fill="none" stroke="#000" stroke-width="1.1"/></svg>
<div class="sim" style="left:1433px;top:95.5px;color:#000;">Exports</div>
<svg style="left:1579px;top:93px" width="14" height="14" viewBox="0 0 14 14"><rect x=".6" y=".6" width="12.8" height="12.8" rx="2.4" fill="#c6c6c6" stroke="#9a9a9a" stroke-width="1.1"/><path d="M4.2 4.2 9.8 9.8M9.8 4.2 4.2 9.8" stroke="#fff" stroke-width="2" stroke-linecap="round"/></svg>
<div style="left:381px;top:111px;width:1540px;height:693px;border:1px solid #6a6a6a;background:#f0f0f0"></div>
<div style="left:382px;top:112px;width:1525px;height:671px;background:linear-gradient(#ffffff,#e0f8ff)"></div>
<div id="vc" style="left:382px;top:112px;width:1525px;height:671px;overflow:hidden"><div style="left:405px;top:-10px;width:744px;height:700px;background:#fff;border-left:1px solid #000"></div><div style="left:406px;top:58px;width:741px;height:20px;background:#e4e4e4"></div><div style="left:1148px;top:-10px;width:1px;height:700px;background:#000"></div><div style="left:1149px;top:-10px;width:6px;height:700px;background:linear-gradient(90deg,#50585e,#8a9298 30%,rgba(200,205,210,.5) 70%,rgba(255,255,255,0))"></div><div class="code" style="left:407.5px;top:0.5px"><span class="a">.text:00401DB4 </span><span class="g">var_s24</span><span class="n">=  </span><span class="t">0x24</span></div><div class="code" style="left:407.5px;top:20.5px"><span class="a">.text:00401DB4 </span><span class="g">arg_4</span><span class="n">=  </span><span class="t">0x2C</span></div><div class="code" style="left:407.5px;top:40.5px"><span class="a">.text:00401DB4 </span></div><div class="code" style="left:407.5px;top:60.5px"><span class="b">.text:00401DB4 </span><span class="n">li      </span><span class="n">$gp, (</span><span class="b">_GLOBAL_OFFSET_TABLE_</span><span class="n">+</span><span class="g">0x7FF0</span><span class="n"> - .)</span></div><div class="code" style="left:407.5px;top:80.5px"><span class="a">.text:00401DBC </span><span class="n">addu    </span><span class="n">$gp, $t9</span></div><div class="code" style="left:407.5px;top:100.5px"><span class="a">.text:00401DC0 </span><span class="n">addiu   </span><span class="n">$sp, -</span><span class="g">0x758</span></div><div class="code" style="left:407.5px;top:120.5px"><span class="a">.text:00401DC4 </span><span class="n">sw      </span><span class="n">$ra, </span><span class="g">0x730+var_s24</span><span class="n">($sp)</span></div><div class="code" style="left:407.5px;top:140.5px"><span class="a">.text:00401DC8 </span><span class="n">sw      </span><span class="n">$fp, </span><span class="g">0x730+var_s20</span><span class="n">($sp)</span></div><div class="code" style="left:407.5px;top:160.5px"><span class="a">.text:00401DCC </span><span class="n">sw      </span><span class="n">$s7, </span><span class="g">0x730+var_s1C</span><span class="n">($sp)</span></div><div class="code" style="left:407.5px;top:180.5px"><span class="a">.text:00401DD0 </span><span class="n">sw      </span><span class="n">$s6, </span><span class="g">0x730+var_s18</span><span class="n">($sp)</span></div><div class="code" style="left:407.5px;top:200.5px"><span class="a">.text:00401DD4 </span><span class="n">sw      </span><span class="n">$s5, </span><span class="g">0x730+var_s14</span><span class="n">($sp)</span></div><div class="code" style="left:407.5px;top:220.5px"><span class="a">.text:00401DD8 </span><span class="n">sw      </span><span class="n">$s4, </span><span class="g">0x730+var_s10</span><span class="n">($sp)</span></div><div class="code" style="left:407.5px;top:240.5px"><span class="a">.text:00401DDC </span><span class="n">sw      </span><span class="n">$s3, </span><span class="g">0x730+var_sC</span><span class="n">($sp)</span></div><div class="code" style="left:407.5px;top:260.5px"><span class="a">.text:00401DE0 </span><span class="n">sw      </span><span class="n">$s2, </span><span class="g">0x730+var_s8</span><span class="n">($sp)</span></div><div class="code" style="left:407.5px;top:280.5px"><span class="a">.text:00401DE4 </span><span class="n">sw      </span><span class="n">$s1, </span><span class="g">0x730+var_s4</span><span class="n">($sp)</span></div><div class="code" style="left:407.5px;top:300.5px"><span class="a">.text:00401DE8 </span><span class="n">sw      </span><span class="n">$s0, </span><span class="g">0x730+var_s0</span><span class="n">($sp)</span></div><div class="code" style="left:407.5px;top:320.5px"><span class="a">.text:00401DEC </span><span class="n">sw      </span><span class="n">$gp, </span><span class="g">0x730+var_718</span><span class="n">($sp)</span></div><div class="code" style="left:407.5px;top:340.5px"><span class="a">.text:00401DF0 </span><span class="n">sw      </span><span class="n">$a1, </span><span class="g">0x730+arg_4</span><span class="n">($sp)</span></div><div class="code" style="left:407.5px;top:360.5px"><span class="a">.text:00401DF4 </span><span class="n">la      </span><span class="n">$a1, dword_400000</span></div><div class="code" style="left:407.5px;top:380.5px"><span class="a">.text:00401DF8 </span><span class="n">la      </span><span class="n">$t9, </span><span class="b">util_memcpy</span></div><div class="code" style="left:407.5px;top:400.5px"><span class="a">.text:00401DFC </span><span class="n">addiu   </span><span class="n">$v0, $sp, </span><span class="g">0x730+var_6A4</span></div><div class="code" style="left:407.5px;top:420.5px"><span class="a">.text:00401E00 </span><span class="n">li      </span><span class="n">$a2, </span><span class="g">0xE</span></div><div class="code" style="left:407.5px;top:440.5px"><span class="a">.text:00401E04 </span><span class="n">sw      </span><span class="n">$v0, </span><span class="g">0x730+var_10</span><span class="n">($sp)</span></div><div class="code" style="left:407.5px;top:460.5px"><span class="a">.text:00401E08 </span><span class="n">addiu   </span><span class="n">$a1, (unk_405F90 - </span><span class="b">0x400000</span><span class="n">)</span></div><div class="code" style="left:407.5px;top:480.5px"><span class="a">.text:00401E0C </span><span class="n">move    </span><span class="n">$fp, $a0</span></div><div class="code" style="left:407.5px;top:500.5px"><span class="a">.text:00401E10 </span><span class="n">jalr    </span><span class="n">$t9 </span><span class="c">; </span><span class="b">util_memcpy</span></div><div class="code" style="left:407.5px;top:520.5px"><span class="a">.text:00401E14 </span><span class="n">move    </span><span class="n">$a0, $v0</span></div><div class="code" style="left:407.5px;top:540.5px"><span class="a">.text:00401E18 </span><span class="n">lw      </span><span class="n">$gp, </span><span class="g">0x730+var_718</span><span class="n">($sp)</span></div><div class="code" style="left:407.5px;top:560.5px"><span class="a">.text:00401E1C </span><span class="n">lw      </span><span class="n">$a0, </span><span class="g">0x730+var_10</span><span class="n">($sp)</span></div><div class="code" style="left:407.5px;top:580.5px"><span class="a">.text:00401E20 </span><span class="n">la      </span><span class="n">$t9, </span><span class="b">xor_decode</span></div><div class="code" style="left:407.5px;top:600.5px"><span class="a">.text:00401E24 </span><span class="n">nop</span></div><div class="code" style="left:407.5px;top:620.5px"><span class="a">.text:00401E28 </span><span class="n">jalr    </span><span class="n">$t9 </span><span class="c">; </span><span class="b">xor_decode</span></div><div class="code" style="left:407.5px;top:640.5px"><span class="a">.text:00401E2C </span><span class="n">li      </span><span class="n">$a1, </span><span class="g">0xE</span></div><div class="code" style="left:407.5px;top:660.5px"><span class="a">.text:00401E30 </span><span class="n">lw      </span><span class="n">$gp, </span><span class="g">0x730+var_718</span><span class="n">($sp)</span></div></div>
<div style="left:382px;top:783px;width:1525px;height:20px;background:#f0f0f0"></div>
<div class="st" style="left:384px;top:789.2px">100.00%</div>
<div class="st" style="left:439.9px;top:789.2px">(499,1484)</div>
<div class="st" style="left:516px;top:789.2px">(1153,653)</div>
<div class="st" style="left:591.2px;top:789.2px">00001DB4</div>
<div class="st" style="left:653.3px;top:789.2px">00401DB4: main</div>
<div style="left:434px;top:786px;width:1px;height:15px;background:#d0d0d0"></div>
<div style="left:510px;top:786px;width:1px;height:15px;background:#d0d0d0"></div>
<div style="left:586px;top:786px;width:1px;height:15px;background:#d0d0d0"></div>
<div style="left:648px;top:786px;width:1px;height:15px;background:#d0d0d0"></div>
<div style="left:752px;top:786px;width:1px;height:15px;background:#d0d0d0"></div>
<div style="left:765px;top:786px;width:1px;height:15px;background:#d0d0d0"></div>
<div style="left:-1px;top:808px;width:1920px;height:26px;background:#fff;border:1px solid #a0a0a0"></div>
<svg style="left:-4px;top:813px" width="16" height="16" viewBox="0 0 16 16"><rect x=".5" y=".5" width="15" height="15" fill="#f4fbff" stroke="#5a6a8a"/><rect x="0" y="0" width="16" height="3" fill="url(#gft)"/><path d="M5 6.5h8M5 8.6h8M5 10.7h8M5 12.8h8" stroke="#707880" stroke-width="1"/></svg>
<div class="sim" style="left:18px;top:816px;color:#000;">Output</div>
<svg style="left:1844px;top:818px" width="9" height="9" viewBox="0 0 9 9"><rect x=".75" y=".75" width="7.5" height="7.5" fill="none" stroke="#000" stroke-width="1.5"/><rect x="0" y="0" width="9" height="2.4" fill="#000"/></svg>
<svg style="left:1870.4px;top:818px" width="9" height="9" viewBox="0 0 9 9"><rect x="2.6" y=".6" width="5.6" height="5" fill="none" stroke="#000" stroke-width="1.3"/><rect x="2" y="0" width="7" height="1.9" fill="#000"/><rect x=".65" y="3.6" width="5.2" height="4.7" fill="#f0f0f0" stroke="#000" stroke-width="1.3"/><rect x="0" y="3" width="6.5" height="1.7" fill="#000"/></svg>
<svg style="left:1897px;top:818.5px" width="8" height="8" viewBox="0 0 8 8"><path d="M.5.5 7.5 7.5M7.5.5.5 7.5" stroke="#000" stroke-width="1.35"/></svg>
<div style="left:-1px;top:836px;width:1920px;height:126px;background:#fff;border:1px solid #828790"></div>
<div style="left:-3px;top:964px;width:45px;height:21px;background:#e1e1e1;border:1px solid #adadad"></div>
<div class="sim" style="left:10px;top:970px;color:#000;">IDC</div>
<div style="left:46px;top:963px;width:1870px;height:23px;background:#fff;border:1px solid #7a7a7a"></div>
<div class="st" style="left:-4.5px;top:993.3px">AU:  idle</div>
<div class="st" style="left:79.1px;top:993.3px">Down</div>
<div class="st" style="left:155.2px;top:993.3px">Disk: 46GB</div>
<div style="left:74px;top:989px;width:1px;height:16px;background:#d4d4d4"></div>
<div style="left:150px;top:989px;width:1px;height:16px;background:#d4d4d4"></div>
<div style="left:226px;top:989px;width:1px;height:16px;background:#d4d4d4"></div>
<div style="left:0;top:0;width:1907px;height:12px;overflow:hidden"><div class="ui" style="left:1.2px;top:-4.9px;font-size:12px;font-weight:400;letter-spacing:0.189px;color:#8e8e8e">File</div><div class="ui" style="left:36.4px;top:-4.9px;font-size:12px;font-weight:400;letter-spacing:0.778px;color:#8e8e8e">Edit</div><div class="ui" style="left:74.0px;top:-4.9px;font-size:12px;font-weight:400;letter-spacing:0.714px;color:#8e8e8e">Jump</div><div class="ui" style="left:122.0px;top:-4.9px;font-size:12px;font-weight:400;letter-spacing:0.245px;color:#8e8e8e">Search</div><div class="ui" style="left:177.3px;top:-4.9px;font-size:12px;font-weight:400;letter-spacing:0.351px;color:#8e8e8e">View</div><div class="ui" style="left:219.3px;top:-4.9px;font-size:12px;font-weight:400;letter-spacing:0.873px;color:#8e8e8e">Debugger</div><div class="ui" style="left:294.1px;top:-4.9px;font-size:12px;font-weight:400;letter-spacing:0.440px;color:#8e8e8e">Lumina</div><div class="ui" style="left:351.2px;top:-4.9px;font-size:12px;font-weight:400;letter-spacing:0.792px;color:#8e8e8e">Options</div><div class="ui" style="left:413.9px;top:-4.9px;font-size:12px;font-weight:400;letter-spacing:0.702px;color:#8e8e8e">Windows</div><div class="ui" style="left:482.5px;top:-4.9px;font-size:12px;font-weight:400;letter-spacing:0.497px;color:#8e8e8e">Finger</div><div class="ui" style="left:534.5px;top:-4.9px;font-size:12px;font-weight:400;letter-spacing:0.578px;color:#8e8e8e">Help</div></div>
<div class="ui" style="left:-0.5px;top:122px;font-size:12px;font-weight:400;letter-spacing:0.355px;color:#000">Function name</div>
<div style="left:0;top:141px;width:360px;height:476px;overflow:hidden"><svg style="left:-2px;top:-5px" width="16" height="16" viewBox="0 0 16 16"><rect x=".5" y=".5" width="15" height="15" fill="url(#gfi)" stroke="#3a76dc"/><rect x="0" y="0" width="16" height="2.6" fill="url(#gft)"/><path d="M11.2 4.6c-1.5-.9-2.9-.2-3.3 1.6L6.3 12c-.4 1.5-1.3 2-2.7 1.5M5.6 8.3h4.6" fill="none" stroke="#262a34" stroke-width="1.25" stroke-linecap="round"/></svg><svg style="left:-2px;top:16px" width="16" height="16" viewBox="0 0 16 16"><rect x=".5" y=".5" width="15" height="15" fill="url(#gfi)" stroke="#3a76dc"/><rect x="0" y="0" width="16" height="2.6" fill="url(#gft)"/><path d="M11.2 4.6c-1.5-.9-2.9-.2-3.3 1.6L6.3 12c-.4 1.5-1.3 2-2.7 1.5M5.6 8.3h4.6" fill="none" stroke="#262a34" stroke-width="1.25" stroke-linecap="round"/></svg><svg style="left:-2px;top:37px" width="16" height="16" viewBox="0 0 16 16"><rect x=".5" y=".5" width="15" height="15" fill="url(#gfi)" stroke="#3a76dc"/><rect x="0" y="0" width="16" height="2.6" fill="url(#gft)"/><path d="M11.2 4.6c-1.5-.9-2.9-.2-3.3 1.6L6.3 12c-.4 1.5-1.3 2-2.7 1.5M5.6 8.3h4.6" fill="none" stroke="#262a34" stroke-width="1.25" stroke-linecap="round"/></svg><svg style="left:-2px;top:58px" width="16" height="16" viewBox="0 0 16 16"><rect x=".5" y=".5" width="15" height="15" fill="url(#gfi)" stroke="#3a76dc"/><rect x="0" y="0" width="16" height="2.6" fill="url(#gft)"/><path d="M11.2 4.6c-1.5-.9-2.9-.2-3.3 1.6L6.3 12c-.4 1.5-1.3 2-2.7 1.5M5.6 8.3h4.6" fill="none" stroke="#262a34" stroke-width="1.25" stroke-linecap="round"/></svg><svg style="left:-2px;top:79px" width="16" height="16" viewBox="0 0 16 16"><rect x=".5" y=".5" width="15" height="15" fill="url(#gfi)" stroke="#3a76dc"/><rect x="0" y="0" width="16" height="2.6" fill="url(#gft)"/><path d="M11.2 4.6c-1.5-.9-2.9-.2-3.3 1.6L6.3 12c-.4 1.5-1.3 2-2.7 1.5M5.6 8.3h4.6" fill="none" stroke="#262a34" stroke-width="1.25" stroke-linecap="round"/></svg><svg style="left:-2px;top:100px" width="16" height="16" viewBox="0 0 16 16"><rect x=".5" y=".5" width="15" height="15" fill="url(#gfi)" stroke="#3a76dc"/><rect x="0" y="0" width="16" height="2.6" fill="url(#gft)"/><path d="M11.2 4.6c-1.5-.9-2.9-.2-3.3 1.6L6.3 12c-.4 1.5-1.3 2-2.7 1.5M5.6 8.3h4.6" fill="none" stroke="#262a34" stroke-width="1.25" stroke-linecap="round"/></svg><svg style="left:-2px;top:121px" width="16" height="16" viewBox="0 0 16 16"><rect x=".5" y=".5" width="15" height="15" fill="url(#gfi)" stroke="#3a76dc"/><rect x="0" y="0" width="16" height="2.6" fill="url(#gft)"/><path d="M11.2 4.6c-1.5-.9-2.9-.2-3.3 1.6L6.3 12c-.4 1.5-1.3 2-2.7 1.5M5.6 8.3h4.6" fill="none" stroke="#262a34" stroke-width="1.25" stroke-linecap="round"/></svg><svg style="left:-2px;top:142px" width="16" height="16" viewBox="0 0 16 16"><rect x=".5" y=".5" width="15" height="15" fill="url(#gfi)" stroke="#3a76dc"/><rect x="0" y="0" width="16" height="2.6" fill="url(#gft)"/><path d="M11.2 4.6c-1.5-.9-2.9-.2-3.3 1.6L6.3 12c-.4 1.5-1.3 2-2.7 1.5M5.6 8.3h4.6" fill="none" stroke="#262a34" stroke-width="1.25" stroke-linecap="round"/></svg><svg style="left:-2px;top:163px" width="16" height="16" viewBox="0 0 16 16"><rect x=".5" y=".5" width="15" height="15" fill="url(#gfi)" stroke="#3a76dc"/><rect x="0" y="0" width="16" height="2.6" fill="url(#gft)"/><path d="M11.2 4.6c-1.5-.9-2.9-.2-3.3 1.6L6.3 12c-.4 1.5-1.3 2-2.7 1.5M5.6 8.3h4.6" fill="none" stroke="#262a34" stroke-width="1.25" stroke-linecap="round"/></svg><svg style="left:-2px;top:184px" width="16" height="16" viewBox="0 0 16 16"><rect x=".5" y=".5" width="15" height="15" fill="url(#gfi)" stroke="#3a76dc"/><rect x="0" y="0" width="16" height="2.6" fill="url(#gft)"/><path d="M11.2 4.6c-1.5-.9-2.9-.2-3.3 1.6L6.3 12c-.4 1.5-1.3 2-2.7 1.5M5.6 8.3h4.6" fill="none" stroke="#262a34" stroke-width="1.25" stroke-linecap="round"/></svg><svg style="left:-2px;top:205px" width="16" height="16" viewBox="0 0 16 16"><rect x=".5" y=".5" width="15" height="15" fill="url(#gfi)" stroke="#3a76dc"/><rect x="0" y="0" width="16" height="2.6" fill="url(#gft)"/><path d="M11.2 4.6c-1.5-.9-2.9-.2-3.3 1.6L6.3 12c-.4 1.5-1.3 2-2.7 1.5M5.6 8.3h4.6" fill="none" stroke="#262a34" stroke-width="1.25" stroke-linecap="round"/></svg><svg style="left:-2px;top:226px" width="16" height="16" viewBox="0 0 16 16"><rect x=".5" y=".5" width="15" height="15" fill="url(#gfi)" stroke="#3a76dc"/><rect x="0" y="0" width="16" height="2.6" fill="url(#gft)"/><path d="M11.2 4.6c-1.5-.9-2.9-.2-3.3 1.6L6.3 12c-.4 1.5-1.3 2-2.7 1.5M5.6 8.3h4.6" fill="none" stroke="#262a34" stroke-width="1.25" stroke-linecap="round"/></svg><svg style="left:-2px;top:247px" width="16" height="16" viewBox="0 0 16 16"><rect x=".5" y=".5" width="15" height="15" fill="url(#gfi)" stroke="#3a76dc"/><rect x="0" y="0" width="16" height="2.6" fill="url(#gft)"/><path d="M11.2 4.6c-1.5-.9-2.9-.2-3.3 1.6L6.3 12c-.4 1.5-1.3 2-2.7 1.5M5.6 8.3h4.6" fill="none" stroke="#262a34" stroke-width="1.25" stroke-linecap="round"/></svg><svg style="left:-2px;top:268px" width="16" height="16" viewBox="0 0 16 16"><rect x=".5" y=".5" width="15" height="15" fill="url(#gfi)" stroke="#3a76dc"/><rect x="0" y="0" width="16" height="2.6" fill="url(#gft)"/><path d="M11.2 4.6c-1.5-.9-2.9-.2-3.3 1.6L6.3 12c-.4 1.5-1.3 2-2.7 1.5M5.6 8.3h4.6" fill="none" stroke="#262a34" stroke-width="1.25" stroke-linecap="round"/></svg><svg style="left:-2px;top:289px" width="16" height="16" viewBox="0 0 16 16"><rect x=".5" y=".5" width="15" height="15" fill="url(#gfi)" stroke="#3a76dc"/><rect x="0" y="0" width="16" height="2.6" fill="url(#gft)"/><path d="M11.2 4.6c-1.5-.9-2.9-.2-3.3 1.6L6.3 12c-.4 1.5-1.3 2-2.7 1.5M5.6 8.3h4.6" fill="none" stroke="#262a34" stroke-width="1.25" stroke-linecap="round"/></svg><svg style="left:-2px;top:310px" width="16" height="16" viewBox="0 0 16 16"><rect x=".5" y=".5" width="15" height="15" fill="url(#gfi)" stroke="#3a76dc"/><rect x="0" y="0" width="16" height="2.6" fill="url(#gft)"/><path d="M11.2 4.6c-1.5-.9-2.9-.2-3.3 1.6L6.3 12c-.4 1.5-1.3 2-2.7 1.5M5.6 8.3h4.6" fill="none" stroke="#262a34" stroke-width="1.25" stroke-linecap="round"/></svg><svg style="left:-2px;top:331px" width="16" height="16" viewBox="0 0 16 16"><rect x=".5" y=".5" width="15" height="15" fill="url(#gfi)" stroke="#3a76dc"/><rect x="0" y="0" width="16" height="2.6" fill="url(#gft)"/><path d="M11.2 4.6c-1.5-.9-2.9-.2-3.3 1.6L6.3 12c-.4 1.5-1.3 2-2.7 1.5M5.6 8.3h4.6" fill="none" stroke="#262a34" stroke-width="1.25" stroke-linecap="round"/></svg><svg style="left:-2px;top:352px" width="16" height="16" viewBox="0 0 16 16"><rect x=".5" y=".5" width="15" height="15" fill="url(#gfi)" stroke="#3a76dc"/><rect x="0" y="0" width="16" height="2.6" fill="url(#gft)"/><path d="M11.2 4.6c-1.5-.9-2.9-.2-3.3 1.6L6.3 12c-.4 1.5-1.3 2-2.7 1.5M5.6 8.3h4.6" fill="none" stroke="#262a34" stroke-width="1.25" stroke-linecap="round"/></svg><svg style="left:-2px;top:373px" width="16" height="16" viewBox="0 0 16 16"><rect x=".5" y=".5" width="15" height="15" fill="url(#gfi)" stroke="#3a76dc"/><rect x="0" y="0" width="16" height="2.6" fill="url(#gft)"/><path d="M11.2 4.6c-1.5-.9-2.9-.2-3.3 1.6L6.3 12c-.4 1.5-1.3 2-2.7 1.5M5.6 8.3h4.6" fill="none" stroke="#262a34" stroke-width="1.25" stroke-linecap="round"/></svg><svg style="left:-2px;top:394px" width="16" height="16" viewBox="0 0 16 16"><rect x=".5" y=".5" width="15" height="15" fill="url(#gfi)" stroke="#3a76dc"/><rect x="0" y="0" width="16" height="2.6" fill="url(#gft)"/><path d="M11.2 4.6c-1.5-.9-2.9-.2-3.3 1.6L6.3 12c-.4 1.5-1.3 2-2.7 1.5M5.6 8.3h4.6" fill="none" stroke="#262a34" stroke-width="1.25" stroke-linecap="round"/></svg><svg style="left:-2px;top:415px" width="16" height="16" viewBox="0 0 16 16"><rect x=".5" y=".5" width="15" height="15" fill="url(#gfi)" stroke="#3a76dc"/><rect x="0" y="0" width="16" height="2.6" fill="url(#gft)"/><path d="M11.2 4.6c-1.5-.9-2.9-.2-3.3 1.6L6.3 12c-.4 1.5-1.3 2-2.7 1.5M5.6 8.3h4.6" fill="none" stroke="#262a34" stroke-width="1.25" stroke-linecap="round"/></svg><svg style="left:-2px;top:436px" width="16" height="16" viewBox="0 0 16 16"><rect x=".5" y=".5" width="15" height="15" fill="url(#gfi)" stroke="#3a76dc"/><rect x="0" y="0" width="16" height="2.6" fill="url(#gft)"/><path d="M11.2 4.6c-1.5-.9-2.9-.2-3.3 1.6L6.3 12c-.4 1.5-1.3 2-2.7 1.5M5.6 8.3h4.6" fill="none" stroke="#262a34" stroke-width="1.25" stroke-linecap="round"/></svg><svg style="left:-2px;top:457px" width="16" height="16" viewBox="0 0 16 16"><rect x=".5" y=".5" width="15" height="15" fill="#9ad0ff" stroke="#3a76dc"/><rect x="0" y="0" width="16" height="2.6" fill="url(#gft)"/><path d="M11.2 4.6c-1.5-.9-2.9-.2-3.3 1.6L6.3 12c-.4 1.5-1.3 2-2.7 1.5M5.6 8.3h4.6" fill="none" stroke="#262a34" stroke-width="1.25" stroke-linecap="round"/></svg><div class="ui" style="left:20.5px;top:-3.5px;font-size:12px;font-weight:400;letter-spacing:0.481px;color:#000">sigaction</div><div class="ui" style="left:20.5px;top:17.5px;font-size:12px;font-weight:400;letter-spacing:0.018px;color:#000">__syscall_rt_sigaction</div><div class="ui" style="left:20.5px;top:38.5px;font-size:12px;font-weight:700;letter-spacing:0.168px;color:#000">_exit</div><div class="ui" style="left:20.5px;top:59.5px;font-size:12px;font-weight:400;letter-spacing:0.718px;color:#000">getegid</div><div class="ui" style="left:20.5px;top:80.5px;font-size:12px;font-weight:400;letter-spacing:0.561px;color:#000">geteuid</div><div class="ui" style="left:20.5px;top:101.5px;font-size:12px;font-weight:400;letter-spacing:0.766px;color:#000">getgid</div><div class="ui" style="left:20.5px;top:122.5px;font-size:12px;font-weight:400;letter-spacing:0.583px;color:#000">getuid</div><div class="ui" style="left:20.5px;top:143.5px;font-size:12px;font-weight:400;letter-spacing:0.479px;color:#000">nanosleep</div><div class="ui" style="left:20.5px;top:164.5px;font-size:12px;font-weight:400;letter-spacing:0.426px;color:#000">times</div><div class="ui" style="left:20.5px;top:185.5px;font-size:12px;font-weight:400;letter-spacing:0.576px;color:#000">memcpy</div><div class="ui" style="left:20.5px;top:206.5px;font-size:12px;font-weight:400;letter-spacing:0.569px;color:#000">memset</div><div class="ui" style="left:20.5px;top:227.5px;font-size:12px;font-weight:400;letter-spacing:0.257px;color:#000">inet_aton</div><div class="ui" style="left:20.5px;top:248.5px;font-size:12px;font-weight:400;letter-spacing:0.928px;color:#000">abort</div><div class="ui" style="left:20.5px;top:269.5px;font-size:12px;font-weight:400;letter-spacing:-0.089px;color:#000">_dl_aux_init</div><div class="ui" style="left:20.5px;top:290.5px;font-size:12px;font-weight:400;letter-spacing:0.357px;color:#000">raise</div><div class="ui" style="left:20.5px;top:311.5px;font-size:12px;font-weight:400;letter-spacing:0.147px;color:#000">__do_global_ctors_aux</div><div class="ui" style="left:20.5px;top:332.5px;font-size:12px;font-weight:400;letter-spacing:0.320px;color:#000">_term_proc</div><div class="ui" style="left:20.5px;top:353.5px;font-size:12px;font-weight:400;letter-spacing:0.240px;color:#000">__deregister_frame_info</div><div class="ui" style="left:20.5px;top:374.5px;font-size:12px;font-weight:400;letter-spacing:0.192px;color:#000">__pthread_initialize_minimal</div><div class="ui" style="left:20.5px;top:395.5px;font-size:12px;font-weight:700;letter-spacing:-0.011px;color:#000">__h_errno_location</div><div class="ui" style="left:20.5px;top:416.5px;font-size:12px;font-weight:400;letter-spacing:0.263px;color:#000">_stdio_term</div><div class="ui" style="left:20.5px;top:437.5px;font-size:12px;font-weight:400;letter-spacing:0.168px;color:#000">_stdio_init</div><div class="ui" style="left:20.5px;top:458.5px;font-size:12px;font-weight:400;letter-spacing:0.179px;color:#000">__register_frame_info</div></div>
<div class="ui" style="left:0px;top:639.8px;font-size:12px;font-weight:400;letter-spacing:0.450px;color:#000">Line 100 of 100</div>
<div style="left:7px;top:68px;width:12px;height:12px;background:#b0fcfc"></div>
<div class="sim" style="left:24px;top:69.2px;color:#000;">Library function</div>
<div style="left:127px;top:68px;width:12px;height:12px;background:#00a2e8"></div>
<div class="sim" style="left:144px;top:69.2px;color:#000;">Regular function</div>
<div style="left:247px;top:68px;width:12px;height:12px;background:#a87c54"></div>
<div class="sim" style="left:264px;top:69.2px;color:#000;">Instruction</div>
<div style="left:337px;top:68px;width:12px;height:12px;background:#c0c0c0"></div>
<div class="sim" style="left:354px;top:69.2px;color:#000;">Data</div>
<div style="left:385px;top:68px;width:12px;height:12px;background:#b5b56b"></div>
<div class="sim" style="left:402px;top:69.2px;color:#000;">Unexplored</div>
<div style="left:469px;top:68px;width:12px;height:12px;background:#ffd0fc"></div>
<div class="sim" style="left:486px;top:69.2px;color:#000;">External symbol</div>
<div style="left:583px;top:68px;width:12px;height:12px;background:#32b432"></div>
<div class="sim" style="left:600px;top:69.2px;color:#000;">Lumina function</div>
</body></html>
